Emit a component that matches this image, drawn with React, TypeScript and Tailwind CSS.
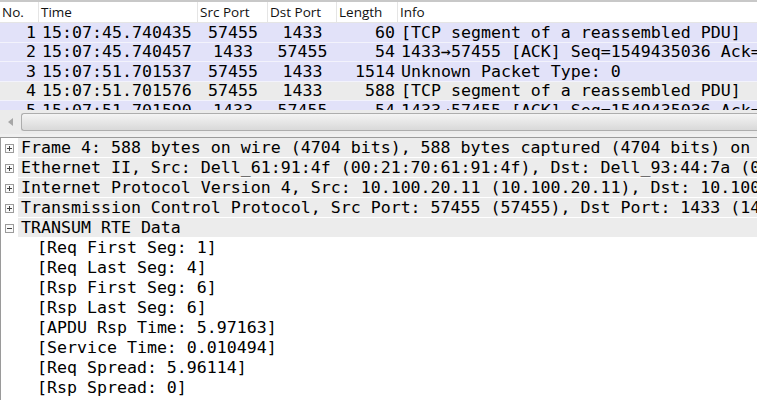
import React from "react";

type Packet = {
  no: number;
  time: string;
  src: string;
  dst: string;
  len: string;
  info: string;
  selected?: boolean;
};

const packets: Packet[] = [
  { no: 1, time: "15:07:45.740435", src: "57455", dst: "1433", len: "60", info: "[TCP segment of a reassembled PDU]" },
  { no: 2, time: "15:07:45.740457", src: "1433", dst: "57455", len: "54", info: "1433→57455 [ACK] Seq=1549435036 Ack=1549435036" },
  { no: 3, time: "15:07:51.701537", src: "57455", dst: "1433", len: "1514", info: "Unknown Packet Type: 0" },
  { no: 4, time: "15:07:51.701576", src: "57455", dst: "1433", len: "588", info: "[TCP segment of a reassembled PDU]", selected: true },
  { no: 5, time: "15:07:51.701590", src: "1433", dst: "57455", len: "54", info: "1433→57455 [ACK] Seq=1549435036 Ack=1549435036" },
];

const layers = [
  "Frame 4: 588 bytes on wire (4704 bits), 588 bytes captured (4704 bits) on interface 0",
  "Ethernet II, Src: Dell_61:91:4f (00:21:70:61:91:4f), Dst: Dell_93:44:7a (00:21:9b:93:44:7a)",
  "Internet Protocol Version 4, Src: 10.100.20.11 (10.100.20.11), Dst: 10.100.20.21 (10.100.20.21)",
  "Transmission Control Protocol, Src Port: 57455 (57455), Dst Port: 1433 (1433), Seq: 1, Ack: 1",
];

const transum = [
  "[Req First Seg: 1]",
  "[Req Last Seg: 4]",
  "[Rsp First Seg: 6]",
  "[Rsp Last Seg: 6]",
  "[APDU Rsp Time: 5.97163]",
  "[Service Time: 0.010494]",
  "[Req Spread: 5.96114]",
  "[Rsp Spread: 0]",
];

const mono = "font-['DejaVu_Sans_Mono','Liberation_Mono',monospace] text-[16.6px] text-black";

export default function App() {
  return (
    <div className="flex h-[400px] w-[757px] flex-col overflow-hidden bg-[#f0f0f0]">
      {/* packet list */}
      <div className="border-t-2 border-[#c8c8c8] bg-white">
        <div className="flex h-[21px] items-center border-b border-[#e5e5e5] bg-white font-['Open_Sans','Noto_Sans',sans-serif] text-[13.5px] text-[#111]">
          <HeaderCell className="w-[39px]">No.</HeaderCell>
          <HeaderCell className="w-[159px]">Time</HeaderCell>
          <HeaderCell className="w-[70px]">Src Port</HeaderCell>
          <HeaderCell className="w-[69px]">Dst Port</HeaderCell>
          <HeaderCell className="w-[61px]">Length</HeaderCell>
          <div className="min-w-0 flex-1 pl-[2px]">Info</div>
        </div>
        <div className={`h-[87px] overflow-hidden ${mono}`}>
          {packets.map((p) => (
            <div
              key={p.no}
              className={`flex h-[19.5px] items-center whitespace-pre border-b border-[#f3f3fc] leading-[19px] ${
                p.selected ? "bg-[#ebebeb]" : "bg-[#e2e2f9]"
              }`}
            >
              <div className="w-[39px] shrink-0 pr-[3px] text-right">{p.no}</div>
              <div className="w-[159px] shrink-0 pl-[3px]">{p.time}</div>
              <div className="w-[70px] shrink-0 text-center">{p.src}</div>
              <div className="w-[69px] shrink-0 text-center">{p.dst}</div>
              <div className="w-[61px] shrink-0 pr-[3px] text-right">{p.len}</div>
              <div className="min-w-0 flex-1 overflow-hidden pl-[3px]">{p.info}</div>
            </div>
          ))}
        </div>
      </div>

      {/* horizontal scrollbar */}
      <div className="flex h-[24px] items-center bg-[#ebebeb]">
        <div className="flex w-[21px] items-center justify-center">
          <svg width="5" height="8" viewBox="0 0 5 8">
            <path d="M5 0 L0 4 L5 8 Z" fill="#a6a6a6" />
          </svg>
        </div>
        <div className="h-[18px] flex-1 rounded-l-[3px] border border-r-0 border-[#adadad] bg-gradient-to-b from-[#f4f4f4] to-[#d9d9d9]" />
      </div>

      {/* splitter */}
      <div className="h-[3px] bg-[#f0f0f0]" />

      {/* details tree */}
      <div className={`flex-1 border-l border-t border-[#9a9a9a] bg-white ${mono}`}>
        {layers.map((l) => (
          <TreeRow key={l} text={l} expanded={false} />
        ))}
        <TreeRow text="TRANSUM RTE Data" expanded />
        {transum.map((t) => (
          <div key={t} className="h-[20px] whitespace-pre pl-[36px] leading-[20px]">
            {t}
          </div>
        ))}
      </div>
    </div>
  );
}

function HeaderCell({ className, children }: { className: string; children: React.ReactNode }) {
  return (
    <div className={`flex h-full shrink-0 items-center border-r border-[#e5e5e5] pl-[2px] ${className}`}>
      {children}
    </div>
  );
}

function TreeRow({ text, expanded }: { text: string; expanded: boolean }) {
  return (
    <div className="flex h-[20px] items-stretch">
      <div className="flex w-[17px] shrink-0 items-center justify-center">
        <svg width="9" height="9" viewBox="0 0 9 9">
          <rect x="0.5" y="0.5" width="8" height="8" fill="#fafafa" stroke="#9b9b9b" />
          <path d="M2 4.5 H7" stroke="#444" strokeWidth="1" />
          {!expanded && <path d="M4.5 2 V7" stroke="#444" strokeWidth="1" />}
        </svg>
      </div>
      <div className="min-w-0 flex-1 overflow-hidden whitespace-pre border-b border-white bg-[#ececec] pl-[3px] leading-[19px]">
        {text}
      </div>
    </div>
  );
}
